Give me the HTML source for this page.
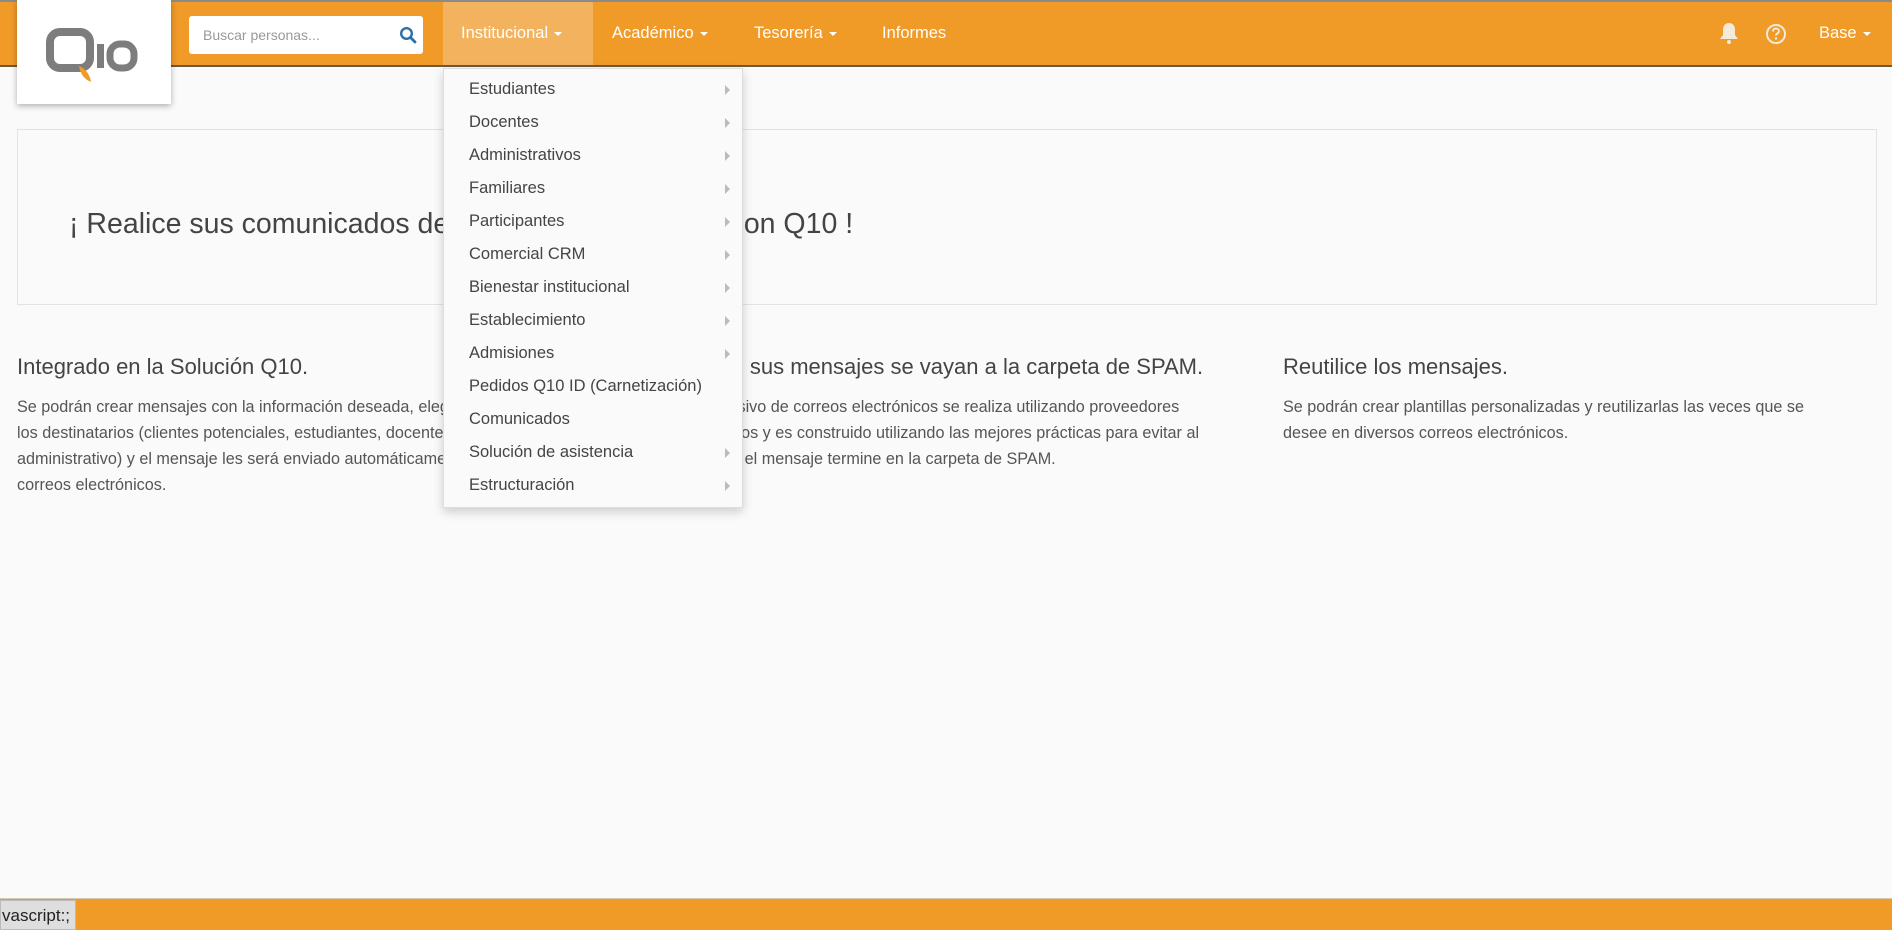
<!DOCTYPE html>
<html><head><meta charset="utf-8">
<style>
*{box-sizing:border-box;margin:0;padding:0}
body{width:1892px;height:930px;overflow:hidden;background:#fafafa;font-family:"Liberation Sans",sans-serif;color:#555;position:relative}
.nav{position:absolute;left:0;top:0;width:1892px;height:67px;background:#f09a28;border-top:2px solid #8a8a8a;border-bottom:2px solid #6b5a44}
.logo{position:absolute;left:17px;top:0;width:154px;height:104px;background:#fff;box-shadow:0 2px 6px rgba(0,0,0,.3);z-index:3}
.search{position:absolute;left:189px;top:14px;width:234px;height:38px;background:#fff;border-radius:3px}
.search span{position:absolute;left:14px;top:11px;font-size:14px;color:#999}
.nl{position:absolute;top:22px;font-size:16.5px;color:#fff}
.caret{display:inline-block;width:0;height:0;border-left:4px solid transparent;border-right:4px solid transparent;border-top:4px solid #fff;vertical-align:middle;margin-left:6px}
.active{position:absolute;left:443px;top:0;width:150px;height:63px;background:#f3b25e}
.jumbo{position:absolute;left:17px;top:129px;width:1860px;height:176px;border:1px solid #e3e3e3;background:#fafafa}
.jumbo h1{position:absolute;left:51px;top:78px;font-size:28.5px;font-weight:normal;color:#444;white-space:nowrap}
.col{position:absolute;top:354px}
.col h3{font-size:22px;font-weight:normal;color:#444;margin-bottom:14px;white-space:nowrap}
.col p{font-size:16.2px;line-height:26px;color:#555;white-space:nowrap}
.dd{position:absolute;left:443px;top:68px;width:300px;height:440px;background:#fafafa;border:1px solid #ddd;box-shadow:0 4px 10px rgba(0,0,0,.18);z-index:4}
.dd div{position:absolute;left:25px;font-size:16.5px;color:#444}
.dd i{position:absolute;left:281px;width:0;height:0;border-top:5px solid transparent;border-bottom:5px solid transparent;border-left:5px solid #bbb}
.foot{position:absolute;left:0;top:898px;width:1892px;height:32px;background:#f09a28;border-top:1px solid #d9c9b0}
.status{position:absolute;left:0;top:900px;width:76px;height:30px;background:#dedede;border:1px solid #bbb;font-size:17px;color:#222;padding:5px 0 0 1px;z-index:5}
</style></head><body>
<div class="nav">
 <div class="search"><span>Buscar personas...</span>
  <svg style="position:absolute;left:210px;top:10px" width="18" height="18" viewBox="0 0 18 18"><circle cx="7.5" cy="7.5" r="5.3" fill="none" stroke="#2a6fa8" stroke-width="2.4"/><path d="M11.5 11.5 L16 16" stroke="#2a6fa8" stroke-width="2.8" stroke-linecap="round"/></svg></div>
 <div class="active"></div>
 <div class="nl" style="left:461px">Institucional<span class="caret"></span></div>
 <div class="nl" style="left:612px">Académico<span class="caret"></span></div>
 <div class="nl" style="left:754px">Tesorería<span class="caret"></span></div>
 <div class="nl" style="left:882px">Informes</div>
 <svg style="position:absolute;left:1718px;top:19px" width="22" height="26" viewBox="0 0 22 26"><path d="M11 2c-4 0-6 3-6 7v5l-3 4h18l-3-4V9c0-4-2-7-6-7z" fill="#f3ead9"/><circle cx="11" cy="21" r="2" fill="#f3ead9"/></svg>
 <svg style="position:absolute;left:1765px;top:21px" width="22" height="22" viewBox="0 0 22 22"><circle cx="11" cy="11" r="9" fill="none" stroke="#f3ead9" stroke-width="2"/><path d="M8 8.5c0-2 1.4-3 3-3s3 1 3 2.7c0 2-3 2.3-3 4.3" fill="none" stroke="#f3ead9" stroke-width="2"/><circle cx="11" cy="15.5" r="1.2" fill="#f3ead9"/></svg>
 <div class="nl" style="left:1819px">Base<span class="caret"></span></div>
</div>
<div class="logo"><svg width="154" height="104" viewBox="0 0 154 104">
 <rect x="33" y="32" width="40" height="36" rx="10" fill="none" stroke="#7d7d7d" stroke-width="8"/>
 <path d="M62 66 q10 4 12 16 q-10-4-12-16z" fill="#f09a28"/>
 <rect x="80" y="44" width="7" height="24" fill="#7d7d7d"/>
 <rect x="93" y="44" width="24" height="24" rx="10" fill="none" stroke="#7d7d7d" stroke-width="7"/>
</svg></div>
<div class="jumbo"><h1>¡ Realice sus comunicados de manera fácil y rápida con Q10 !</h1></div>
<div class="col" style="left:17px"><h3>Integrado en la Solución Q10.</h3>
<p>Se podrán crear mensajes con la información deseada, elegir<br>los destinatarios (clientes potenciales, estudiantes, docentes,<br>administrativo) y el mensaje les será enviado automáticamente a sus<br>correos electrónicos.</p></div>
<div class="col" style="left:652px"><h3>Evite que sus mensajes se vayan a la carpeta de SPAM.</h3>
<p>El envío masivo de correos electrónicos se realiza utilizando proveedores<br>especializados y es construido utilizando las mejores prácticas para evitar al<br>máximo que el mensaje termine en la carpeta de SPAM.</p></div>
<div class="col" style="left:1283px"><h3>Reutilice los mensajes.</h3>
<p>Se podrán crear plantillas personalizadas y reutilizarlas las veces que se<br>desee en diversos correos electrónicos.</p></div>
<div class="dd">
 <div style="top:11px">Estudiantes</div><i style="top:16px"></i>
 <div style="top:44px">Docentes</div><i style="top:49px"></i>
 <div style="top:77px">Administrativos</div><i style="top:82px"></i>
 <div style="top:110px">Familiares</div><i style="top:115px"></i>
 <div style="top:143px">Participantes</div><i style="top:148px"></i>
 <div style="top:176px">Comercial CRM</div><i style="top:181px"></i>
 <div style="top:209px">Bienestar institucional</div><i style="top:214px"></i>
 <div style="top:242px">Establecimiento</div><i style="top:247px"></i>
 <div style="top:275px">Admisiones</div><i style="top:280px"></i>
 <div style="top:308px">Pedidos Q10 ID (Carnetización)</div>
 <div style="top:341px">Comunicados</div>
 <div style="top:374px">Solución de asistencia</div><i style="top:379px"></i>
 <div style="top:407px">Estructuración</div><i style="top:412px"></i>
</div>
<div class="foot"></div>
<div class="status">vascript:;</div>
</body></html>
